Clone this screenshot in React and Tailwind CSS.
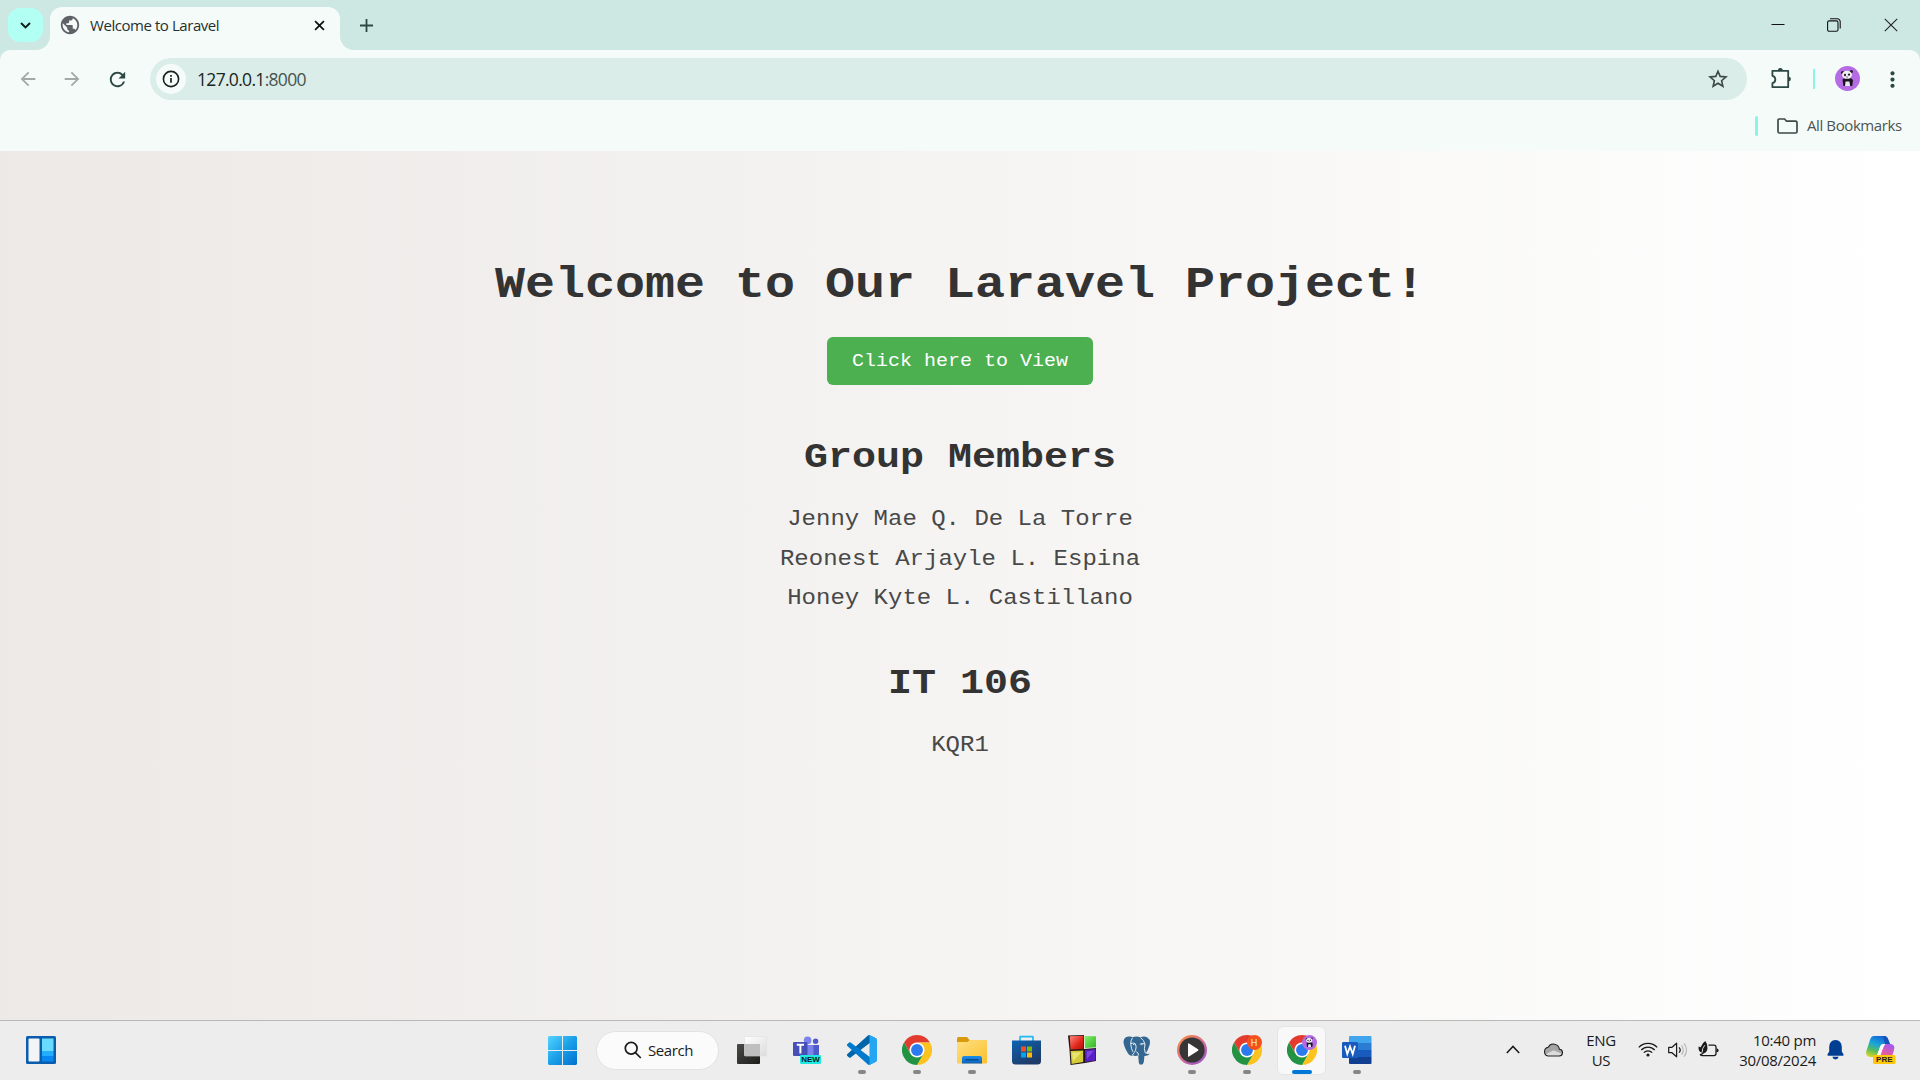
import React from "react";
import {
  MdArrowBack,
  MdArrowForward,
  MdRefresh,
  MdPublic,
  MdMoreVert,
} from "react-icons/md";

function WindowControls() {
  return (
    <div className="ml-auto flex h-[50px] items-center">
      <div className="flex w-[57px] justify-center">
        <svg width="14" height="14" viewBox="0 0 14 14"><path d="M0.5 6.5H13.5" stroke="#111" strokeWidth="1" /></svg>
      </div>
      <div className="flex w-[56px] justify-center">
        <svg width="14" height="14" viewBox="0 0 14 14" fill="none" stroke="#111" strokeWidth="1.1">
          <rect x="0.6" y="2.9" width="10.4" height="10.4" rx="1.6" />
          <path d="M3 0.7H10.2A3 3 0 0 1 13.2 3.7V10.6" />
        </svg>
      </div>
      <div className="flex w-[58px] justify-center">
        <svg width="14" height="14" viewBox="0 0 14 14"><path d="M0.8 0.8L13.2 13.2M13.2 0.8L0.8 13.2" stroke="#222" strokeWidth="1.1" /></svg>
      </div>
    </div>
  );
}

function TabStrip() {
  return (
    <div className="flex h-[50px] items-end bg-[#cde8e2] pl-2">
      <div className="relative z-10 mb-2 flex h-[34px] w-[35px] items-center justify-center rounded-xl bg-[#b2fff3]">
        <svg width="11" height="7" viewBox="0 0 11 7" fill="none" stroke="#10201c" strokeWidth="2"><path d="M1 1L5.5 5.4L10 1" /></svg>
      </div>
      <div className="-ml-[7px] h-3.5 w-3.5 bg-[#f5fbf9]"><div className="h-full w-full rounded-br-[14px] bg-[#cde8e2]" /></div>
      <div className="flex h-[43px] w-[290px] items-center rounded-t-xl bg-[#f5fbf9] pb-[7px] pl-[9px] pr-[15px]">
        <MdPublic className="h-[22px] w-[22px] text-[#5f6368]" />
        <span className="ml-[9px] text-[15px] tracking-[-0.44px] text-[#26302e]">Welcome to Laravel</span>
        <svg className="ml-auto" width="11" height="11" viewBox="0 0 12 12"><path d="M1.2 1.2L10.8 10.8M10.8 1.2L1.2 10.8" stroke="#111" strokeWidth="1.9" /></svg>
      </div>
      <div className="h-3.5 w-3.5 bg-[#f5fbf9]"><div className="h-full w-full rounded-bl-[14px] bg-[#cde8e2]" /></div>
      <svg className="mb-[18px] ml-1.5" width="13" height="13" viewBox="0 0 13 13"><path d="M6.5 0V13M0 6.5H13" stroke="#2c4843" strokeWidth="1.8" /></svg>
      <WindowControls />
    </div>
  );
}

function Panda({ className }) {
  return (
    <svg className={className} viewBox="0 0 25 25">
      <circle cx="12.5" cy="12.5" r="12.5" fill="#b56be3" />
      <path d="M7.5 13.5Q8 11.5 12.5 12Q17.5 11.5 18 14.5L17.2 20H8.4Z" fill="#1a1420" />
      <path d="M10.6 15.5h3.8l.8 4.6h-5.2z" fill="#ece8f0" />
      <circle cx="7.6" cy="6.6" r="1.7" fill="#222" />
      <circle cx="16.4" cy="5.6" r="1.6" fill="#222" />
      <ellipse cx="12" cy="8.8" rx="5" ry="4" fill="#f1eff3" />
      <ellipse cx="10" cy="9" rx="1.1" ry="1.2" fill="#26222b" />
      <ellipse cx="14" cy="8.6" rx="1.1" ry="1.2" fill="#26222b" />
      <path d="M11.4 11h1.4" stroke="#26222b" strokeWidth=".8" />
    </svg>
  );
}

function Toolbar() {
  return (
    <div className="bg-[#cde8e2]">
      <div className="flex h-[101px] flex-col rounded-t-[10px] bg-[#f5fbf9] pt-2">
        <div className="flex h-[42px] items-center">
          <div className="flex w-[150px] items-center pl-[17px]">
            <MdArrowBack className="h-[22px] w-[22px] text-[#a2aaa8]" />
            <MdArrowForward className="ml-[22px] h-[22px] w-[22px] text-[#a2aaa8]" />
            <MdRefresh className="ml-[23px] h-[23px] w-[23px] text-[#2c4843]" />
          </div>
          <div className="flex h-[42px] w-[1597px] items-center rounded-full bg-[#daede8] pl-1.5 pr-[19px]">
            <div className="flex h-[30px] w-[30px] items-center justify-center rounded-full bg-[#f5fbf9]">
              <svg width="18" height="18" viewBox="0 0 18 18" fill="none" stroke="#18211f">
                <circle cx="9" cy="9" r="7.6" strokeWidth="1.6" />
                <path d="M9 8V12.8M9 5V6.7" strokeWidth="1.7" />
              </svg>
            </div>
            <span className="ml-[11px] text-[17.5px] tracking-[-0.69px] text-[#1a2422]">127.0.0.1<span className="text-[#485451]">:8000</span></span>
            <svg className="ml-auto" width="20" height="20" viewBox="0 0 20 20" fill="none" stroke="#3b4a47" strokeWidth="1.6">
              <path d="M10 2.2L12.2 7.4L18 7.9L13.6 11.7L14.9 17.3L10 14.3L5.1 17.3L6.4 11.7L2 7.9L7.8 7.4Z" />
            </svg>
          </div>
          <svg className="mb-0.5 ml-6" width="21" height="21" viewBox="0 0 21 21">
            <path d="M1.4 2.8H17.2V19.2H1.4V15.2A3.8 3.8 0 0 0 1.4 7.8Z" fill="none" stroke="#2c4843" strokeWidth="1.8" strokeLinejoin="round" />
            <path d="M6.8 2.5A2.5 2.5 0 0 1 11.8 2.5ZM17.5 8.7A2.4 2.4 0 0 1 17.5 13.5Z" fill="#2c4843" />
          </svg>
          <div className="ml-[21px] h-5 w-0.5 bg-[#8ef3e4]" />
          <Panda className="mb-px ml-5 h-[25px] w-[25px]" />
          <MdMoreVert className="ml-5 h-[25px] w-[25px] text-[#2c4843]" />
        </div>
        <div className="mt-[15px] flex h-[21px] items-center justify-end pr-[18px]">
          <div className="h-5 w-[3px] rounded bg-[#8ef3e4]" />
          <svg className="ml-[19px]" width="21" height="16" viewBox="0 0 21 16"><path d="M1 2.2Q1 1 2.2 1H7.6L9.6 3.2H18.6Q20 3.2 20 4.4V13.6Q20 15 18.6 15H2.4Q1 15 1 13.6Z" fill="none" stroke="#3d4a47" strokeWidth="1.7" /></svg>
          <span className="ml-[9px] w-[95px] whitespace-nowrap text-[15px] tracking-[-0.4px] text-[#4a5553]">All Bookmarks</span>
        </div>
      </div>
    </div>
  );
}

function Page() {
  return (
    <main className="flex h-[869px] flex-col items-center bg-[linear-gradient(to_right,#ece9e6,#ffffff)] pt-[103px] text-center font-['Liberation_Mono',monospace] text-[#333]">
      <h1 className="origin-[50%_43px] scale-y-[0.88] text-[50px] font-bold leading-[60px]">Welcome to Our Laravel Project!</h1>
      <button className="mt-[23px] h-12 rounded-md bg-[#4caf50] px-[25px] text-xl text-white"><span className="block origin-[50%_75%] scale-y-[0.92]">Click here to View</span></button>
      <h2 className="mt-[49px] origin-[50%_34px] scale-y-[0.88] text-[40px] font-bold leading-[46px]">Group Members</h2>
      <div className="mt-[19px] text-2xl leading-[39.5px] text-[#484848]">
        <p className="origin-[50%_26px] scale-y-[0.92]">Jenny Mae Q. De La Torre</p>
        <p className="origin-[50%_26px] scale-y-[0.92]">Reonest Arjayle L. Espina</p>
        <p className="origin-[50%_26px] scale-y-[0.92]">Honey Kyte L. Castillano</p>
      </div>
      <h2 className="mt-[42px] origin-[50%_34px] scale-y-[0.88] text-[40px] font-bold leading-[46px]">IT 106</h2>
      <p className="mt-[19px] origin-[50%_26px] scale-y-[0.92] text-2xl leading-[39.5px] text-[#484848]">KQR1</p>
    </main>
  );
}

function WidgetsIcon() {
  return (
    <svg width="30" height="28" viewBox="0 0 30 28">
      <rect width="30" height="28" rx="1.5" fill="#0a5cad" />
      <rect x="2.5" y="2.5" width="11" height="23" rx="1" fill="#f3f4f6" />
      <rect x="16" y="2.5" width="11.5" height="12.5" fill="#69dbff" />
      <rect x="16" y="15" width="11.5" height="5" fill="#22adff" />
      <rect x="16" y="20" width="11.5" height="5.5" fill="#0887f0" />
    </svg>
  );
}

function WindowsIcon() {
  return (
    <svg width="29" height="29" viewBox="0 0 29 29">
      <defs><linearGradient id="win" gradientUnits="userSpaceOnUse" x1="0" y1="0" x2="29" y2="29"><stop stopColor="#55d3ff" /><stop offset=".5" stopColor="#1aa0e8" /><stop offset="1" stopColor="#0070cf" /></linearGradient></defs>
      <path fill="url(#win)" d="M1 0H14V14H0V1ZM15 0H28L29 1V14H15ZM0 15H14V29H1L0 28ZM15 15H29V28L28 29H15Z" />
    </svg>
  );
}

function TaskViewIcon() {
  return (
    <svg width="30" height="28" viewBox="0 0 30 28">
      <defs>
        <linearGradient id="tvDark" x1="0" y1="0" x2="1" y2="1"><stop stopColor="#4a4a47" /><stop offset="1" stopColor="#1d1d1b" /></linearGradient>
        <linearGradient id="tvLight" x1="0" y1="0" x2="1" y2="1"><stop stopColor="#fff" /><stop offset="1" stopColor="#dcdcdc" /></linearGradient>
      </defs>
      <rect y="8" width="23" height="20" rx="1" fill="url(#tvDark)" />
      <rect x="7.5" y=".5" width="22" height="19.5" rx="1" fill="url(#tvLight)" stroke="#dfdfdf" strokeWidth=".6" />
      <rect x="7.5" y="8" width="15.5" height="12" fill="#bfbfbf" />
    </svg>
  );
}

function TeamsIcon() {
  return (
    <svg width="28" height="28" viewBox="0 0 28 28">
      <circle cx="14.6" cy="4.4" r="3.8" fill="#7b83eb" />
      <circle cx="22.6" cy="5.2" r="2.7" fill="#5059c9" />
      <path d="M20 9H26V20H20Z" fill="#5059c9" />
      <path d="M14 9H20.5V21H14Z" fill="#7b83eb" />
      <rect y="6" width="14.5" height="14" rx="1" fill="#464eb8" />
      <path d="M3.8 8.8H11M7.4 8.8V17.5" stroke="#fff" strokeWidth="2" />
      <rect x="7" y="19" width="21" height="9" rx="1.3" fill="#1de9e0" />
      <text x="17.5" y="26.4" textAnchor="middle" fontFamily="Liberation Sans, sans-serif" fontWeight="700" fontSize="8" fill="#081b1c">NEW</text>
    </svg>
  );
}

function CodeIcon() {
  return (
    <svg width="30" height="30" viewBox="0 0 100 100">
      <path d="M96.5 10.8L75.9.9a6.2 6.2 0 0 0-7.1 1.2L1.3 63.6a4.2 4.2 0 0 0 0 6.2l5.5 5a4.2 4.2 0 0 0 5.3.2L93.4 13.4A4.1 4.1 0 0 1 100 16.7v-.3a6.3 6.3 0 0 0-3.5-5.6Z" fill="#0065a9" />
      <path d="M96.5 89.2L75.9 99.1a6.2 6.2 0 0 1-7.1-1.2L1.3 36.4a4.2 4.2 0 0 1 0-6.2l5.5-5a4.2 4.2 0 0 1 5.3-.2l81.3 61.6a4.1 4.1 0 0 0 6.6-3.3v.3a6.3 6.3 0 0 1-3.5 5.6Z" fill="#007acc" />
      <path d="M75.9 99.1a6.2 6.2 0 0 1-7.1-1.2c2.3 2.3 6.2.7 6.2-2.6V4.7c0-3.3-3.9-4.9-6.2-2.6A6.2 6.2 0 0 1 75.9.9l20.6 9.9a6.3 6.3 0 0 1 3.5 5.6v67.2a6.3 6.3 0 0 1-3.5 5.6Z" fill="#25a6f2" />
    </svg>
  );
}

function ChromeIcon() {
  return (
    <svg width="30" height="30" viewBox="0 0 48 48">
      <circle cx="24" cy="24" r="12" fill="#fff" />
      <path fill="#e33b2e" d="M24,12H44.7812a23.9939,23.9939,0,0,0-41.5639.0029L13.6079,30l.0093-.0024A11.9852,11.9852,0,0,1,24,12Z" />
      <path fill="#fcc31e" d="M34.3913,30.0029,24.0007,48A23.994,23.994,0,0,0,44.78,12.0031H23.9989l-.0025.0093A11.985,11.985,0,0,1,34.3913,30.0029Z" />
      <path fill="#229342" d="M13.6086,30.0031,3.218,12.006A23.994,23.994,0,0,0,24.0025,48L34.3931,30.0029l-.0067-.0068a11.9852,11.9852,0,0,1-20.7778.007Z" />
      <circle cx="24" cy="24" r="9.5" fill="#2b7af0" />
    </svg>
  );
}

function FolderIcon() {
  return (
    <svg width="30" height="27" viewBox="0 0 30 27">
      <defs>
        <linearGradient id="fold" x1="0" y1="0" x2="1" y2="1"><stop stopColor="#ffe082" /><stop offset="1" stopColor="#fbc02d" /></linearGradient>
        <linearGradient id="foldBlue" x1="0" y1="0" x2="0" y2="1"><stop stopColor="#1a8fe8" /><stop offset="1" stopColor="#0c63bd" /></linearGradient>
      </defs>
      <path d="M0 1.5Q0 0 1.5 0H10L13 3.5V9H0Z" fill="#d99a0b" />
      <path d="M0 6Q0 5 1 5H10.5L13 3H29Q30 3 30 4V25.5Q30 26.5 29 26.5H1Q0 26.5 0 25.5Z" fill="url(#fold)" />
      <path d="M5 26.5V21Q5 19 7 19H23Q25 19 25 21V26.5Z" fill="url(#foldBlue)" />
      <path d="M8.5 22.8H21.5" stroke="#07447f" strokeWidth="1.2" />
    </svg>
  );
}

function StoreIcon() {
  return (
    <svg width="29" height="30" viewBox="0 0 29 30">
      <defs><linearGradient id="store" x1="0" y1="0" x2=".6" y2="1"><stop stopColor="#0b64b4" /><stop offset="1" stopColor="#1f3a66" /></linearGradient></defs>
      <path d="M8 6V2.2Q8 1.6 8.6 1.6H20.4Q21 1.6 21 2.2V6" fill="none" stroke="#22b8f4" strokeWidth="1.7" />
      <path d="M0 5.5H29V26Q29 29.5 25.5 29.5H3.5Q0 29.5 0 26Z" fill="url(#store)" />
      <path d="M9 11.5H14V16.5H9Z" fill="#f25022" /><path d="M15 11.5H20V16.5H15Z" fill="#7fba00" />
      <path d="M9 17.5H14V22.5H9Z" fill="#00a4ef" /><path d="M15 17.5H20V22.5H15Z" fill="#ffb900" />
    </svg>
  );
}

function BlocksIcon() {
  return (
    <svg width="28" height="30" viewBox="0 0 28 30">
      <defs>
        <linearGradient id="blkR" x1="0" y1="0" x2="1" y2="1"><stop stopColor="#ff8a80" /><stop offset=".6" stopColor="#e0261c" /><stop offset="1" stopColor="#a8140e" /></linearGradient>
        <linearGradient id="blkG" x1="0" y1="0" x2="1" y2="1"><stop stopColor="#86f06c" /><stop offset="1" stopColor="#2fb51f" /></linearGradient>
      </defs>
      <path d="M0 .5L16 0V14L28 13V26L17 28L2.5 30L1.5 15Z" fill="#241615" />
      <path d="M1.8 1.2L15.5 .7V14L2.5 14.5Z" fill="url(#blkR)" />
      <path d="M16.5 1L28 1.3V12.3L17 13Z" fill="url(#blkG)" />
      <path d="M2.6 16L15.2 15.5V27L3.6 29Z" fill="#d3cb38" />
      <path d="M17 15L27.6 14V25.5L17.2 27Z" fill="#5a1fc4" />
      <path d="M4 17.6L13.5 17.2L5 26Z" fill="#e9e472" /><path d="M18.6 16.4L26 15.6L19 24Z" fill="#7a45e0" />
    </svg>
  );
}

function ElephantIcon() {
  return (
    <svg width="28" height="29" viewBox="0 0 28 29">
      <path d="M5.5 .5Q8 .2 9.6 1.2Q13.5 0 17.6 1.2Q21.5 -.2 24.4 1.6Q28 4 26.6 9Q25.2 14 22.6 17.6Q24.6 18.4 26.6 17.6Q25.8 20 21.4 20L20.8 26Q20.4 28.6 18.2 28.8Q16 28.8 15.8 26.4L15.2 19.5Q12 20.5 9.8 19.2Q7.6 20.8 5.4 18Q1.2 11.5 .5 6.4Q.4 1.2 5.5 .5Z" fill="#336791" />
      <path d="M9.2 2.2Q7.4 4.6 7.8 8.6Q8.4 13.4 9.8 15.6M17.8 1.8Q21.4 4.4 22 8.4Q20.6 12.6 22.2 16.8M8 7.6Q10.4 6.2 12.4 7.8Q13.8 10.6 12.6 14.2Q11.6 16.6 9.6 18.8M15.6 19Q15.6 16.6 13.6 15.8M21.8 8Q19.6 6.6 17.2 8" fill="none" stroke="#e4ebf1" strokeWidth="1" strokeLinecap="round" />
      <circle cx="10.8" cy="8.6" r=".7" fill="#fff" /><circle cx="19" cy="8.6" r=".7" fill="#fff" />
    </svg>
  );
}

function MediaIcon() {
  return (
    <svg width="30" height="30" viewBox="0 0 30 30">
      <defs><linearGradient id="media" x1="0" y1="0" x2=".8" y2="1"><stop stopColor="#ff8f2e" /><stop offset=".5" stopColor="#d8728c" /><stop offset="1" stopColor="#9a55c8" /></linearGradient></defs>
      <circle cx="15" cy="15" r="15" fill="url(#media)" />
      <circle cx="15" cy="15" r="12.6" fill="#363636" />
      <path d="M11 8.8V21.2Q11 22.2 12 21.6L21 15.8Q22 15 21 14.2L12 8.4Q11 7.8 11 8.8Z" fill="#fff" />
    </svg>
  );
}

function WordIcon() {
  return (
    <svg width="30" height="28" viewBox="0 0 30 28">
      <path d="M8 0H28.5Q29.5 0 29.5 1V7H7V1Q7 0 8 0Z" fill="#41a5ee" />
      <path d="M7 7H29.5V14H7Z" fill="#2b7cd3" /><path d="M7 14H29.5V21H7Z" fill="#185abd" />
      <path d="M7 21H29.5V27Q29.5 28 28.5 28H8Q7 28 7 27Z" fill="#103f91" />
      <rect y="6" width="16" height="16" rx="1.2" fill="#185abd" />
      <path d="M3 9.8L5.3 18L8 10.5L10.7 18L13 9.8" fill="none" stroke="#fff" strokeWidth="1.8" />
    </svg>
  );
}

function TaskCell({ children, running, active }) {
  return (
    <div className="relative flex h-[59px] w-[55px] shrink-0 items-center justify-center pb-px">
      <div className={active ? "flex h-[49px] w-[49px] items-center justify-center rounded-md border border-[#e5e5e5] bg-[#f8f8f8]" : "flex"}>
        <div className="relative">{children}</div>
      </div>
      {running && <div className="absolute bottom-[6px] h-1 w-2 rounded-full bg-[#868686]" />}
      {active && <div className="absolute bottom-[6px] h-1 w-5 rounded-full bg-[#0078d7]" />}
    </div>
  );
}

function CopilotIcon() {
  return (
    <svg width="30" height="28" viewBox="0 0 30 28">
      <defs>
        <linearGradient id="copA" x1=".6" y1="0" x2=".2" y2="1"><stop stopColor="#1466d8" /><stop offset=".4" stopColor="#1aa6d8" /><stop offset=".7" stopColor="#58bd5a" /><stop offset="1" stopColor="#d9d62b" /></linearGradient>
        <linearGradient id="copB" x1=".7" y1="0" x2=".3" y2="1"><stop stopColor="#a45af0" /><stop offset=".5" stopColor="#e35ba0" /><stop offset="1" stopColor="#ff8a4c" /></linearGradient>
      </defs>
      <path d="M8 0H18Q21 0 22 3L24 8H18Q15 8 14 11L11 19Q10 21 7 21H4Q-1 20 .4 15L4 4Q5 0 8 0Z" fill="url(#copA)" />
      <path d="M20 8H25Q29.5 9 28 14L25.5 22Q24 27 20 27H10Q13 25 14 22L17 11Q18 8 20 8Z" fill="url(#copB)" />
      <path d="M17 0H19Q21 .5 22 3L24 8H19Z" fill="#1553b8" />
      <path d="M17.5 8H19L13 21H9.5Q11 20 12 17L14 11Q15 8 17.5 8Z" fill="#fff" />
      <rect x="7" y="19" width="22.5" height="9" rx="1.5" fill="#ffc60a" />
      <text x="18.3" y="26.3" textAnchor="middle" fontFamily="Liberation Sans, sans-serif" fontWeight="700" fontSize="8" fill="#222">PRE</text>
    </svg>
  );
}

function SystemTray() {
  return (
    <div className="ml-auto flex h-[59px] items-center pb-[2px] text-[#1b1b1b]">
      <div className="flex w-10 justify-center"><svg width="14" height="9" viewBox="0 0 14 9" fill="none" stroke="#1a1a1a" strokeWidth="1.5"><path d="M.8 8L7 1.4L13.2 8" /></svg></div>
      <div className="flex w-10 justify-center">
        <svg width="20" height="14" viewBox="0 0 20 14">
          <path d="M5 13H15.8A3.4 3.4 0 0 0 16.4 6.2A6 6 0 0 0 5.2 4.2A4.5 4.5 0 0 0 5 13Z" fill="#a5a5a5" />
          <path d="M2.2 11.5L10.5 7.2L18.5 10.5Q18 13 15.8 13H5Q3 13 2.2 11.5Z" fill="#dcdcdc" />
          <path d="M5 13H15.8A3.4 3.4 0 0 0 16.4 6.2A6 6 0 0 0 5.2 4.2A4.5 4.5 0 0 0 5 13Z" fill="none" stroke="#222" strokeWidth="1.1" />
        </svg>
      </div>
      <div className="w-14 text-center text-[15px] leading-5 tracking-[-0.4px]">ENG<br />US</div>
      <div className="ml-[9px] flex w-[20px] justify-center">
        <svg width="20" height="15" viewBox="0 0 20 15" fill="none" stroke="#1a1a1a" strokeWidth="1.3">
          <path d="M.8 5.4A12.6 12.6 0 0 1 19.2 5.4M3.3 8A9.2 9.2 0 0 1 16.7 8M5.8 10.6A5.8 5.8 0 0 1 14.2 10.6" /><circle cx="10" cy="13" r="1.6" fill="#1a1a1a" stroke="none" />
        </svg>
      </div>
      <div className="ml-2.5 flex w-5">
        <svg width="20" height="16" viewBox="0 0 20 16" fill="none" strokeWidth="1.2">
          <path d="M.7 5.3H4L8.6 1.2V14.8L4 10.7H.7Z" stroke="#1a1a1a" strokeLinejoin="round" />
          <path d="M11 5.3A4 4 0 0 1 11 10.7" stroke="#1a1a1a" />
          <path d="M13.5 3.4A6.8 6.8 0 0 1 13.5 12.6M16 1.4A10 10 0 0 1 16 14.6" stroke="#b5b5b5" />
        </svg>
      </div>
      <div className="ml-2.5 flex w-[21px] pb-0.5">
        <svg width="21" height="18" viewBox="0 0 21 18">
          <path d="M10.5 5.2H16Q18 5.2 18 7.2V13.6Q18 15.6 16 15.6H4Q2.5 15.6 2.2 13.8" fill="none" stroke="#1a1a1a" strokeWidth="1.3" />
          <path d="M18.5 8.5H19.2Q20.6 9 20.6 10.4Q20.6 11.8 19.2 12.3H18.5Z" fill="#1a1a1a" />
          <path d="M7.3 1Q9.8 4 9.5 8.2Q9 12.5 5.5 13.5L3.5 15.5L2.8 15L4 12.5Q0 12 .6 6.5L2.6 7.2Q4.6 2.5 7.3 1Z" fill="#1a1a1a" />
          <path d="M4.2 12.5Q4 8 6.8 5.2" fill="none" stroke="#ededed" strokeWidth=".9" />
        </svg>
      </div>
      <div className="ml-[19px] w-[78px] whitespace-nowrap text-right text-[15px] leading-5 tracking-[-0.28px]"><div>10:40 pm</div><div>30/08/2024</div></div>
      <svg className="ml-[11px]" width="17" height="20" viewBox="0 0 17 20" fill="#003e92"><path d="M8.5 0Q14.6 .4 14.8 7V11.5L16.6 14.6Q16.8 15.8 15.6 15.8H1.4Q.2 15.8 .4 14.6L2.2 11.5V7Q2.4 .4 8.5 0ZM5.3 16.8H11.7Q11 19.4 8.5 19.4Q6 19.4 5.3 16.8Z" /></svg>
      <div className="ml-[22px] mr-6 mt-px"><CopilotIcon /></div>
    </div>
  );
}

function Taskbar() {
  return (
    <footer className="flex h-[60px] items-center border-t border-[#b9b9b9] bg-[#ededed]">
      <div className="flex w-[535px] shrink-0 pb-px pl-[26px]"><WidgetsIcon /></div>
      <TaskCell><WindowsIcon /></TaskCell>
      <div className="mb-px ml-[6px] mr-[5px] flex h-[39px] w-[123px] shrink-0 items-center rounded-full border border-[#e2e2e2] bg-[#fbfbfb] pl-[27px]">
        <svg width="18" height="18" viewBox="0 0 18 18" fill="none" stroke="#1a1a1a" strokeWidth="1.7"><circle cx="7.2" cy="7.2" r="5.9" /><path d="M11.4 11.6L16.8 17" /></svg>
        <span className="ml-[6px] text-[15px] tracking-[-0.4px] text-[#1b1b1b]">Search</span>
      </div>
      <TaskCell><TaskViewIcon /></TaskCell>
      <TaskCell><TeamsIcon /></TaskCell>
      <TaskCell running><CodeIcon /></TaskCell>
      <TaskCell running><ChromeIcon /></TaskCell>
      <TaskCell running><FolderIcon /></TaskCell>
      <TaskCell><StoreIcon /></TaskCell>
      <TaskCell><BlocksIcon /></TaskCell>
      <TaskCell><ElephantIcon /></TaskCell>
      <TaskCell running><MediaIcon /></TaskCell>
      <TaskCell running>
        <ChromeIcon />
        <span className="absolute right-0 top-0 flex h-[15px] w-[15px] items-center justify-center rounded-full bg-[#f4511e] text-[9px] text-white">H</span>
      </TaskCell>
      <TaskCell active>
        <ChromeIcon />
        <Panda className="absolute right-0 top-0 h-[15px] w-[15px]" />
      </TaskCell>
      <TaskCell running><WordIcon /></TaskCell>
      <SystemTray />
    </footer>
  );
}

export default function App() {
  return (
    <div className="flex h-[1080px] w-[1920px] flex-col overflow-hidden font-['Open_Sans','Noto_Sans',sans-serif]">
      <TabStrip />
      <Toolbar />
      <Page />
      <Taskbar />
    </div>
  );
}
